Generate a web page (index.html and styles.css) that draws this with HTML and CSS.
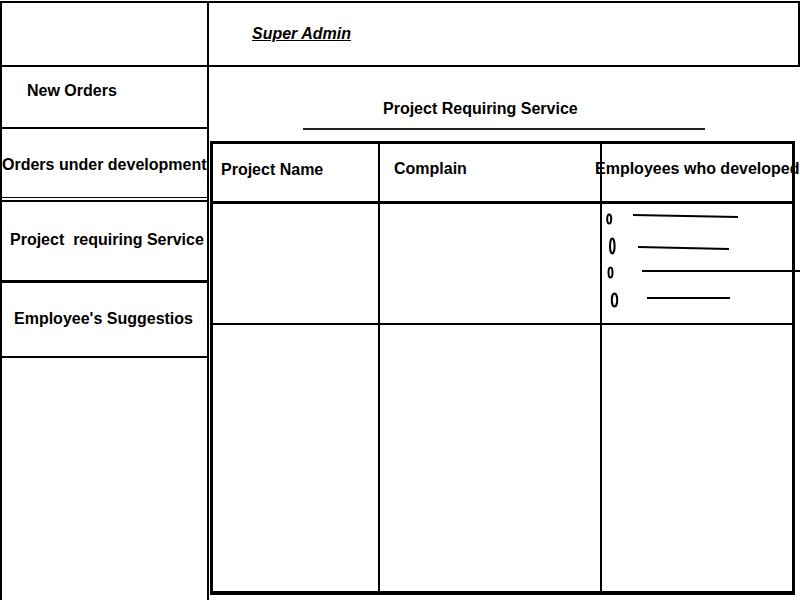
FILE: index.html
```html
<!DOCTYPE html>
<html lang="en">
<head>
    <meta charset="UTF-8">
    <meta name="viewport" content="width=device-width, initial-scale=1.0">
    <title>Super Admin - Project Requiring Service</title>
    <link rel="stylesheet" href="styles.css">
</head>
<body>

<div class="page">
    <!-- Левое меню -->
    <div class="sidebar">
        <div class="side-box side-blank"></div>
        <div class="side-box side-new">New Orders</div>
        <div class="side-box side-dev">Orders under development</div>
        <div class="side-box side-service">Project&nbsp; requiring Service</div>
        <div class="side-box side-suggest">Employee's Suggestios</div>
    </div>

    <div class="main">
        <div class="topbar">
            <span class="user">Super Admin</span>
        </div>

        <h2 class="title">Project Requiring Service</h2>
        <div class="title-line"></div>

        <table class="projects">
            <thead>
                <tr class="head-row">
                    <th class="col-name">Project Name</th>
                    <th class="col-complain">Complain</th>
                    <th class="col-devs">Employees who developed</th>
                </tr>
            </thead>
            <tbody>
                <tr class="row-first">
                    <td></td>
                    <td></td>
                    <td class="devs">
                        <svg class="dev-marks" width="190" height="110" viewBox="0 0 190 110">
                            <ellipse cx="7.2" cy="15" rx="2" ry="4.5"/>
                            <line x1="31" y1="11" x2="136" y2="13"/>
                            <ellipse cx="10.3" cy="42" rx="2.3" ry="7.5"/>
                            <line x1="36" y1="43" x2="127" y2="45"/>
                            <ellipse cx="8.5" cy="68.5" rx="2" ry="5"/>
                            <line x1="40" y1="67" x2="198" y2="67"/>
                            <ellipse cx="12.5" cy="96" rx="2.7" ry="6.5"/>
                            <line x1="45" y1="94" x2="128" y2="94"/>
                        </svg>
                    </td>
                </tr>
                <tr class="row-empty">
                    <td></td>
                    <td></td>
                    <td></td>
                </tr>
            </tbody>
        </table>
    </div>
</div>

</body>
</html>
```

FILE: styles.css
```css
/* Каркас страницы администратора */
* {
    box-sizing: border-box;
}
body {
    margin: 0;
    font-family: "Liberation Sans", Arial, sans-serif;
    font-size: 16px;
    font-weight: bold;
    line-height: 18px;
    color: #000;
    background: #fff;
}
.page {
    display: grid;
    grid-template-columns: 207px 1fr;
    height: 599px;
    margin-top: 1px;
    border-top: 2px solid #000;
    overflow: hidden;
}

/* Меню слева */
.sidebar {
    border-left: 2px solid #000;
}
.side-box {
    white-space: nowrap;
}
.side-blank {
    height: 64px;
    border-bottom: 2px solid #000;
}
.side-new {
    height: 62px;
    padding: 15px 0 0 25px;
    border-bottom: 2px solid #000;
}
.side-dev {
    height: 69px;
    padding-top: 27px;
    border-bottom: 1px solid #000;
}
.side-service {
    height: 83px;
    margin-top: 2px;
    padding: 29px 0 0 8px;
    border-top: 2px solid #000;
    border-bottom: 3px solid #000;
}
.side-suggest {
    height: 75px;
    padding: 27px 0 0 12px;
    border-bottom: 2px solid #000;
}

/* Основная часть */
.main {
    border-left: 2px solid #000;
}
.topbar {
    height: 64px;
    padding: 22px 0 0 43px;
    border-bottom: 2px solid #000;
    border-right: 2px solid #000;
}
.user {
    font-style: italic;
    text-decoration: underline;
}
.title {
    margin: 33px 0 0;
    padding-left: 174px;
    font-size: 16px;
    line-height: 18px;
}
.title-line {
    width: 402px;
    height: 2px;
    margin: 10px 0 0 94px;
    background-color: #222;
}

/* Таблица проектов */
.projects {
    width: 585px;
    margin: 11px 0 0 1px;
    border-collapse: separate;
    border-spacing: 0;
    table-layout: fixed;
    border-top: 3px solid #000;
    border-left: 3px solid #000;
    border-right: 3px solid #000;
    border-bottom: 4px solid #000;
}
.projects th, .projects td {
    padding: 0;
    text-align: left;
    vertical-align: top;
}
.projects th {
    padding-top: 17px;
    border-bottom: 3px solid #000;
    white-space: nowrap;
}
.projects th:not(:last-child), .projects td:not(:last-child) {
    border-right: 2px solid #000;
}
.projects .col-name {
    width: 167px;
    padding-left: 8px;
}
.projects .col-complain {
    width: 222px;
    padding-left: 14px;
    padding-top: 16px;
}
.projects .col-devs {
    width: 190px;
    padding-top: 16px;
    text-indent: -7px;
    overflow: visible;
}
.head-row {
    height: 60px;
}
.row-first {
    height: 121px;
}
.row-first td {
    border-bottom: 2px solid #000;
}
.row-empty {
    height: 266px;
}
.dev-marks {
    display: block;
    overflow: visible;
}
.dev-marks ellipse, .dev-marks line {
    fill: none;
    stroke: #000;
    stroke-width: 2;
}
```
